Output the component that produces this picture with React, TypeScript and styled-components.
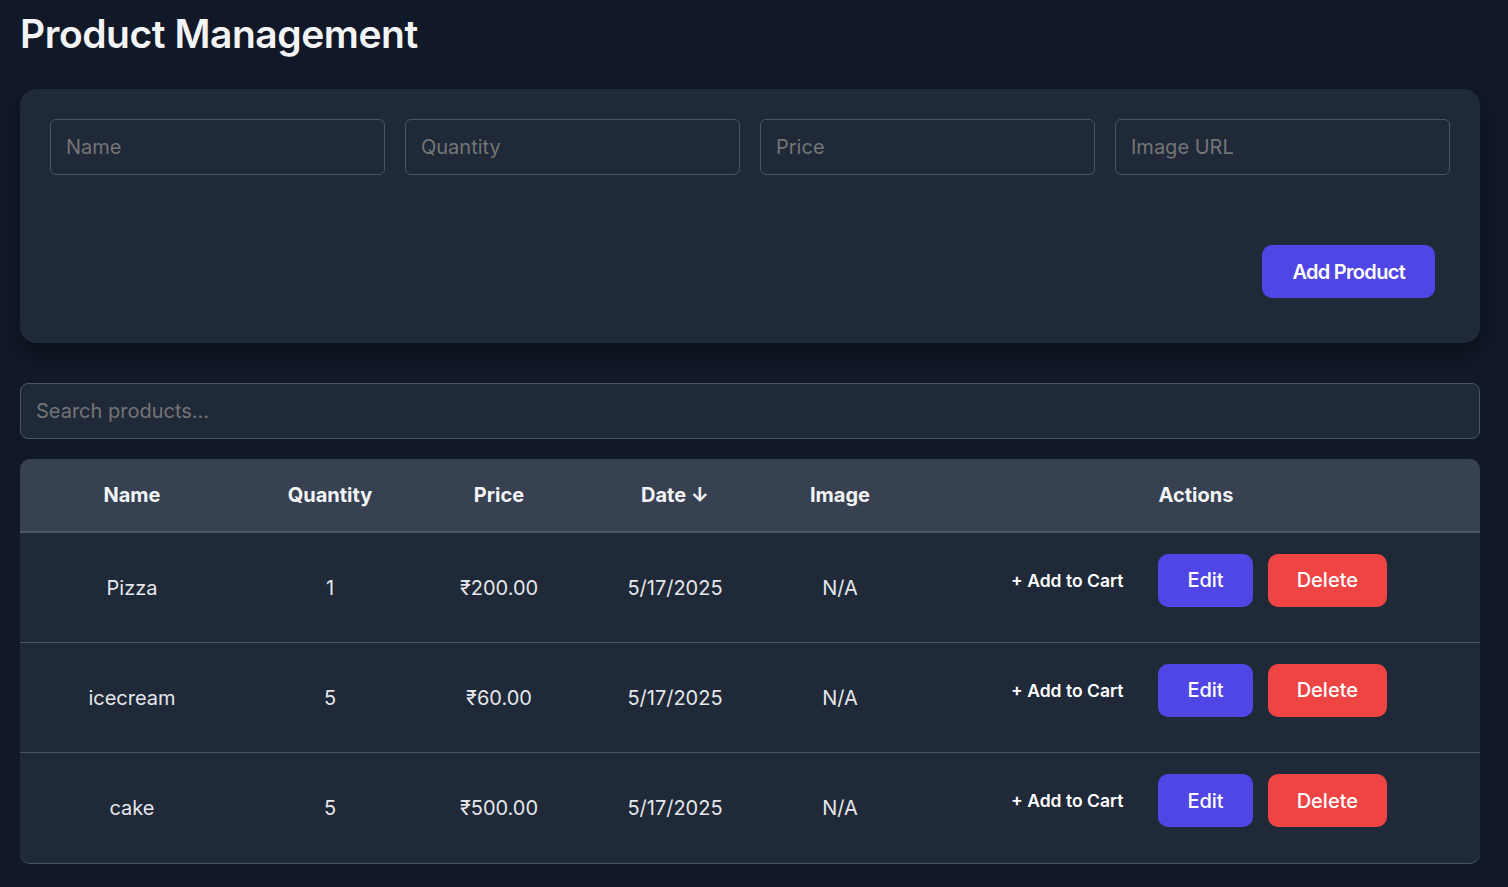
import React from "react";
import styled, { createGlobalStyle } from "styled-components";

const GlobalStyle = createGlobalStyle`
  html, body {
    margin: 0;
    padding: 0;
    background: #111827;
  }
  body {
    font-family: Inter, "Noto Sans", "Liberation Sans", sans-serif;
    color: #f3f4f6;
  }
  * { box-sizing: border-box; }
`;

const Page = styled.div`
  min-height: 887px;
  background: #111827;
  padding: 10px 28px 20px 20px;
`;

const Title = styled.h1`
  margin: 0 0 31px;
  font-size: 39px;
  line-height: 48px;
  font-weight: 600;
  color: #f3f4f6;
  letter-spacing: -0.45px;
`;

const FormCard = styled.div`
  background: #1f2937;
  border-radius: 16px;
  padding: 30px 30px 45px;
  box-shadow: 0 10px 20px rgba(0, 0, 0, 0.35);
`;

const InputGrid = styled.div`
  display: grid;
  grid-template-columns: repeat(4, 1fr);
  gap: 20px;
`;

const TextInput = styled.input`
  height: 56px;
  width: 100%;
  background: #1f2937;
  border: 1px solid #4b5563;
  border-radius: 6px;
  padding: 0 15px;
  font-family: inherit;
  font-size: 20px;
  color: #f3f4f6;
  outline: none;
  &::placeholder {
    color: #757575;
  }
`;

const FormFooter = styled.div`
  display: flex;
  justify-content: flex-end;
  margin-top: 70px;
  padding-right: 15px;
`;

const Button = styled.button<{ $tone: "primary" | "danger" }>`
  height: 53px;
  padding: 0 29px;
  border: none;
  border-radius: 10px;
  background: ${(p) => (p.$tone === "danger" ? "#ef4444" : "#4f46e5")};
  color: #ffffff;
  font-family: inherit;
  font-size: 20px;
  font-weight: 500;
  cursor: pointer;
`;

const AddButton = styled(Button)`
  padding: 0 30px;
  font-weight: 600;
  letter-spacing: -0.7px;
`;

const SearchInput = styled(TextInput)`
  margin-top: 40px;
  border-radius: 8px;
`;

const Table = styled.div`
  margin-top: 20px;
  border-radius: 10px;
  overflow: hidden;
  background: #1f2937;
  border-bottom: 1px solid #4b5563;
`;

const cols = "224px 172px 166px 186px 144px 1fr";

const HeadRow = styled.div`
  display: grid;
  grid-template-columns: ${cols};
  height: 74px;
  background: #374151;
  border-bottom: 2px solid #4b5563;
`;

const HeadCell = styled.div`
  display: flex;
  align-items: center;
  justify-content: center;
  font-size: 20px;
  font-weight: 700;
  color: #f3f4f6;
`;

const Row = styled.div<{ $last?: boolean }>`
  display: grid;
  grid-template-columns: ${cols};
  height: 110px;
  border-bottom: ${(p) => (p.$last ? "none" : "1px solid #4b5563")};
`;

const Cell = styled.div`
  display: flex;
  align-items: center;
  justify-content: center;
  font-size: 20px;
  color: #e5e7eb;
`;

const ActionCell = styled.div`
  display: flex;
  align-items: center;
  justify-content: center;
  gap: 15px;
  padding-right: 14px;
  padding-bottom: 15px;
`;

const CartButton = styled.button`
  background: transparent;
  border: none;
  padding: 0 20px;
  font-family: inherit;
  font-size: 17.5px;
  font-weight: 600;
  color: #ffffff;
  cursor: pointer;
`;

const products = [
  { name: "Pizza", qty: 1, price: "₹200.00", date: "5/17/2025" },
  { name: "icecream", qty: 5, price: "₹60.00", date: "5/17/2025" },
  { name: "cake", qty: 5, price: "₹500.00", date: "5/17/2025" },
];

export default function App() {
  return (
    <Page>
      <GlobalStyle />
      <Title>Product Management</Title>
      <FormCard>
        <InputGrid>
          <TextInput placeholder="Name" />
          <TextInput placeholder="Quantity" />
          <TextInput placeholder="Price" />
          <TextInput placeholder="Image URL" />
        </InputGrid>
        <FormFooter>
          <AddButton $tone="primary">Add Product</AddButton>
        </FormFooter>
      </FormCard>
      <SearchInput placeholder="Search products..." />
      <Table>
        <HeadRow>
          <HeadCell>Name</HeadCell>
          <HeadCell>Quantity</HeadCell>
          <HeadCell>Price</HeadCell>
          <HeadCell>Date ↓</HeadCell>
          <HeadCell>Image</HeadCell>
          <HeadCell>Actions</HeadCell>
        </HeadRow>
        {products.map((p, i) => (
          <Row key={p.name} $last={i === products.length - 1}>
            <Cell>{p.name}</Cell>
            <Cell>{p.qty}</Cell>
            <Cell>{p.price}</Cell>
            <Cell>{p.date}</Cell>
            <Cell>N/A</Cell>
            <ActionCell>
              <CartButton>+ Add to Cart</CartButton>
              <Button $tone="primary">Edit</Button>
              <Button $tone="danger">Delete</Button>
            </ActionCell>
          </Row>
        ))}
      </Table>
    </Page>
  );
}
